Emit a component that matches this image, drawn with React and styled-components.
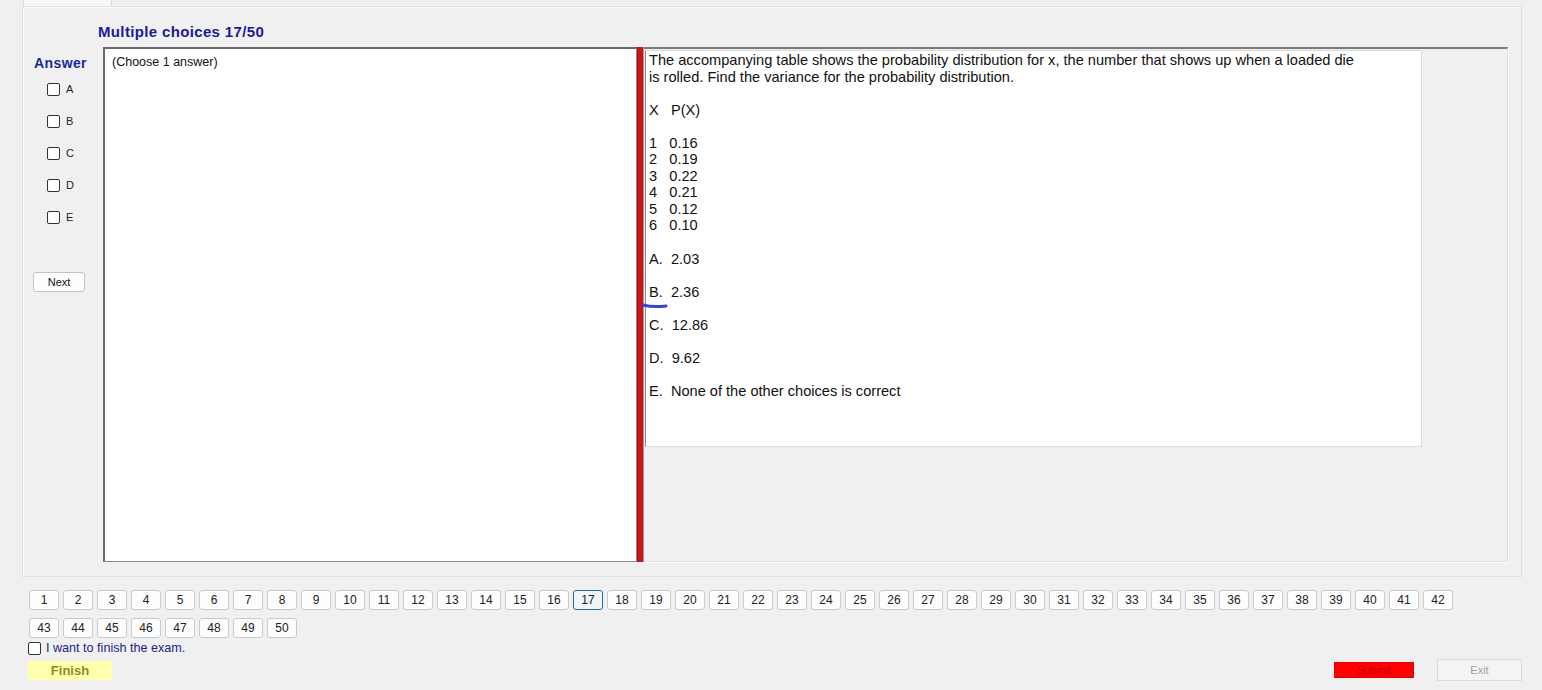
import React from 'react'
import styled, { createGlobalStyle } from 'styled-components'

const GlobalStyle = createGlobalStyle`
  html, body {
    margin: 0;
    padding: 0;
    background: #f0f0f0;
  }
  body {
    font-family: "Liberation Sans", Arial, sans-serif;
  }
`

const question = `The accompanying table shows the probability distribution for x, the number that shows up when a loaded die
is rolled. Find the variance for the probability distribution.

X\u00a0\u00a0\u00a0P(X)

1\u00a0\u00a0\u00a00.16
2\u00a0\u00a0\u00a00.19
3\u00a0\u00a0\u00a00.22
4\u00a0\u00a0\u00a00.21
5\u00a0\u00a0\u00a00.12
6\u00a0\u00a0\u00a00.10

A.\u00a0\u00a02.03

B.\u00a0\u00a02.36

C.\u00a0\u00a012.86

D.\u00a0\u00a09.62

E.\u00a0\u00a0None of the other choices is correct`

const letters = ['A', 'B', 'C', 'D', 'E']
const numbers = Array.from({ length: 50 }, (_, i) => i + 1)

export default function App() {
    return (
        <>
            <GlobalStyle />
            <Page>
                <TabStrip>
                    <Tab />
                </TabStrip>
                <Panel>
                    <Title>Multiple choices 17/50</Title>
                    <Content>
                        <AnswerColumn>
                            <AnswerLabel>Answer</AnswerLabel>
                            <Options>
                                {letters.map((l) => (
                                    <Option key={l}>
                                        <Box />
                                        <span>{l}</span>
                                    </Option>
                                ))}
                            </Options>
                            <NextButton>Next</NextButton>
                        </AnswerColumn>
                        <AnswerBox>(Choose 1 answer)</AnswerBox>
                        <Splitter />
                        <QuestionArea>
                            <QuestionBox>{question}</QuestionBox>
                            <Mark width="28" height="8" viewBox="0 0 28 8">
                                <path d="M2 4 Q 12 6.5 25 5" stroke="#3444d6" strokeWidth="3" fill="none" strokeLinecap="round" />
                            </Mark>
                        </QuestionArea>
                    </Content>
                </Panel>
                <NavGrid>
                    {numbers.map((n) => (
                        <NavButton key={n} $current={n === 17}>{n}</NavButton>
                    ))}
                </NavGrid>
                <FinishCheck>
                    <Box />
                    <span>I want to finish the exam.</span>
                </FinishCheck>
                <BottomBar>
                    <FinishButton>Finish</FinishButton>
                    <RightButtons>
                        <SubmitButton>Submit</SubmitButton>
                        <ExitButton>Exit</ExitButton>
                    </RightButtons>
                </BottomBar>
            </Page>
        </>
    )
}

const Page = styled.div`
    width: 1542px;
    height: 690px;
    overflow: hidden;
    background: #f0f0f0;
    padding-left: 4px;
    box-sizing: border-box;
`
const TabStrip = styled.div`
    height: 6px;
    display: flex;
`
const Tab = styled.div`
    margin-left: 19px;
    width: 87px;
    height: 6px;
    background: #f7f7f7;
    border-left: 1px solid #dadada;
    border-right: 1px solid #dadada;
`
const Panel = styled.div`
    margin-left: 18px;
    width: 1500px;
    height: 571px;
    box-sizing: border-box;
    border: 1px solid #e0e0e0;
    box-shadow: inset 1px 1px 0 #fbfbfb;
    display: flex;
    flex-direction: column;
`
const Title = styled.div`
    margin: 17px 0 0 75px;
    height: 16px;
    line-height: 16px;
    font-size: 15px;
    letter-spacing: 0.35px;
    font-weight: bold;
    color: #1b1b9a;
`
const Content = styled.div`
    margin-top: 7px;
    height: 515px;
    display: flex;
`
const AnswerColumn = styled.div`
    width: 80px;
    display: flex;
    flex-direction: column;
`
const AnswerLabel = styled.div`
    margin: 8px 0 0 11px;
    height: 16px;
    line-height: 16px;
    font-size: 14px;
    letter-spacing: 0.4px;
    font-weight: bold;
    color: #1b2a9a;
`
const Options = styled.div`
    margin: 2px 0 0 24px;
    display: flex;
    flex-direction: column;
`
const Option = styled.div`
    height: 32px;
    display: flex;
    align-items: center;
    gap: 6px;
    font-size: 11px;
    color: #222;
`
const Box = styled.span`
    width: 11px;
    height: 11px;
    border: 1px solid #333;
    border-radius: 2px;
    background: #fff;
    display: inline-block;
    flex-shrink: 0;
`
const NextButton = styled.button`
    margin: 39px 0 0 10px;
    width: 52px;
    height: 20px;
    padding: 0;
    background: #fdfdfd;
    border: 1px solid #c4c4c4;
    border-radius: 3px;
    font-family: "Liberation Sans", Arial, sans-serif;
    font-size: 11px;
    color: #111;
`
const AnswerBox = styled.div`
    width: 534px;
    box-sizing: border-box;
    background: #fff;
    border: 1px solid #8a8a8a;
    border-left: 2px solid #6a6a6a;
    border-top: 2px solid #6a6a6a;
    padding: 5px 7px;
    font-size: 12.5px;
    line-height: 16px;
    color: #111;
`
const Splitter = styled.div`
    width: 5px;
    background: #cc1419;
    border-left: 1px solid #a80f12;
    border-right: 1px solid #9a9a9a;
`
const QuestionArea = styled.div`
    position: relative;
    width: 864px;
    box-sizing: border-box;
    border-top: 2px solid #7a7a7a;
    border-right: 1px solid #dedede;
    border-bottom: 1px solid #dedede;
    box-shadow: 1px 1px 0 #fcfcfc;
    padding: 1px 0 0 1px;
`
const QuestionBox = styled.div`
    width: 777px;
    height: 397px;
    box-sizing: border-box;
    background: #fff;
    border: 1px solid #dcdcdc;
    border-left: 1px solid #8a8a8a;
    padding: 1px 3px;
    font-size: 14.6px;
    line-height: 16.55px;
    color: #111;
    white-space: pre-wrap;
`
const Mark = styled.svg`
    position: absolute;
    left: -3px;
    top: 252px;
`
const NavGrid = styled.div`
    margin: 13px 0 0 25px;
    width: 1428px;
    display: flex;
    flex-wrap: wrap;
    gap: 8px 4px;
`
const NavButton = styled.button`
    width: 30px;
    height: 20px;
    padding: 0;
    box-sizing: border-box;
    background: ${(p) => (p.$current ? '#eef6fc' : '#fdfdfd')};
    border: 1px solid ${(p) => (p.$current ? '#2a6a98' : '#cacaca')};
    border-radius: 3px;
    font-family: "Liberation Sans", Arial, sans-serif;
    font-size: 12px;
    color: #222;
`
const FinishCheck = styled.div`
    margin: 2px 0 0 24px;
    height: 16px;
    display: flex;
    align-items: center;
    gap: 5px;
    font-size: 12.6px;
    color: #22228a;
`
const BottomBar = styled.div`
    margin-top: 3px;
    height: 22px;
    padding: 0 20px 0 24px;
    display: flex;
    align-items: center;
    justify-content: space-between;
`
const FinishButton = styled.div`
    width: 84px;
    height: 19px;
    background: #ffffae;
    display: flex;
    align-items: center;
    justify-content: center;
    font-size: 13px;
    font-weight: bold;
    color: #8c8c1e;
`
const RightButtons = styled.div`
    display: flex;
    align-items: center;
    gap: 23px;
`
const SubmitButton = styled.div`
    width: 80px;
    height: 16px;
    box-sizing: border-box;
    background: #ff0000;
    border: 1px solid #e40000;
    display: flex;
    align-items: center;
    justify-content: center;
    font-size: 11px;
    color: #c00000;
`
const ExitButton = styled.div`
    width: 85px;
    height: 22px;
    box-sizing: border-box;
    background: #f4f4f4;
    border: 1px solid #dcdcdc;
    display: flex;
    align-items: center;
    justify-content: center;
    font-size: 11px;
    color: #a0a0a0;
`
